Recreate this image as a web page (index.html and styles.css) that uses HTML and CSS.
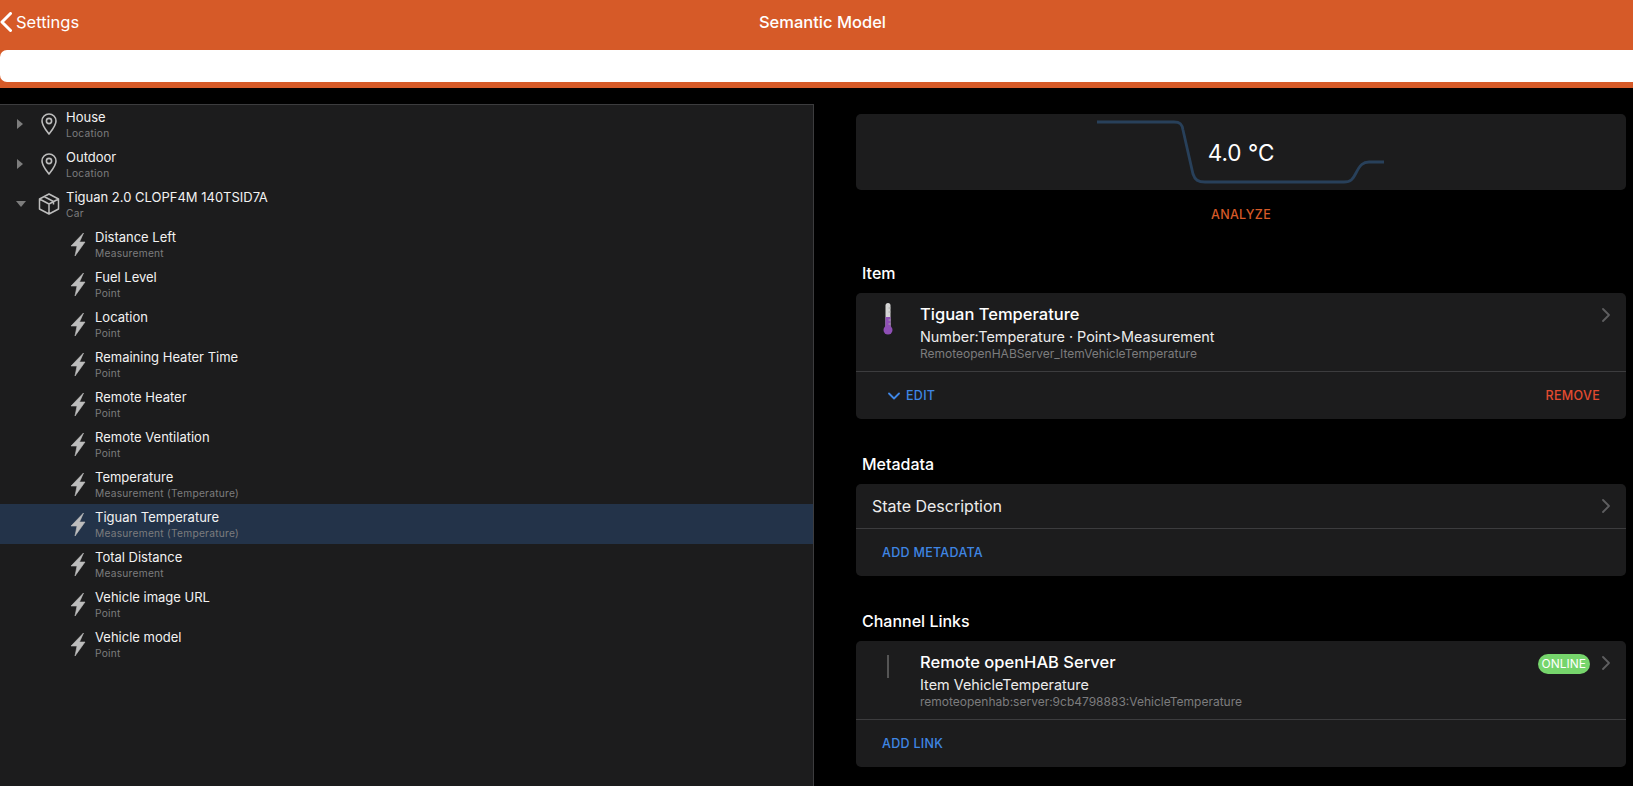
FILE: index.html
```html
<!DOCTYPE html>
<html lang="en">
<head>
<meta charset="utf-8">
<title>Semantic Model</title>
<link rel="stylesheet" href="styles.css">
</head>
<body>
<svg class="defs" width="0" height="0" aria-hidden="true">
  <symbol id="pin" viewBox="0 0 16 22"><path d="M8 21C4.500 16.500 1 12.500 1 8a7 7 0 0 1 14 0c0 4.500-3.500 8.500-7 13Z" fill="none" stroke="currentColor" stroke-width="1.600" stroke-linejoin="round"/><circle cx="8" cy="8" r="2.600" fill="none" stroke="currentColor" stroke-width="1.600"/></symbol>
  <symbol id="cube" viewBox="0 0 22 22"><path d="M11 1 20.500 6v10L11 21 1.500 16V6L11 1ZM1.500 6 11 11l9.500-5M11 11v10M6 3.500l9.500 5v3" fill="none" stroke="currentColor" stroke-width="1.500" stroke-linejoin="round"/></symbol>
  <symbol id="bolt" viewBox="0 0 16 23"><path d="M13.500 0 1 13h6L5 23 15 9H9.500L13.500 0Z" fill="currentColor" stroke="currentColor" stroke-width=".6" stroke-linejoin="round"/></symbol>
  <symbol id="chev" viewBox="0 0 8 14"><path d="M1 1l6 6-6 6" fill="none" stroke="currentColor" stroke-width="1.800" stroke-linecap="round" stroke-linejoin="round"/></symbol>
</svg>

<header class="topbar">
  <div class="navbar">
    <a class="back"><svg class="back-icon" viewBox="0 0 12 20"><path d="M10.500 1.500 2 10l8.500 8.500" fill="none" stroke="currentColor" stroke-width="3" stroke-linecap="round" stroke-linejoin="round"/></svg>Settings</a>
    <h1 class="title">Semantic Model</h1>
  </div>
  <div class="search"></div>
</header>

<main class="layout">
  <nav class="tree">
    <div class="row">
      <span class="tog tog-right"></span>
      <svg class="ic ic-pin"><use href="#pin"/></svg>
      <div class="txt"><div class="name">House</div><div class="sub">Location</div></div>
    </div>
    <div class="row">
      <span class="tog tog-right"></span>
      <svg class="ic ic-pin"><use href="#pin"/></svg>
      <div class="txt"><div class="name">Outdoor</div><div class="sub">Location</div></div>
    </div>
    <div class="row">
      <span class="tog tog-down"></span>
      <svg class="ic ic-cube"><use href="#cube"/></svg>
      <div class="txt"><div class="name">Tiguan 2.0 CLOPF4M 140TSID7A</div><div class="sub">Car</div></div>
    </div>
    <div class="row child"><svg class="ic ic-bolt"><use href="#bolt"/></svg><div class="txt"><div class="name">Distance Left</div><div class="sub">Measurement</div></div></div>
    <div class="row child"><svg class="ic ic-bolt"><use href="#bolt"/></svg><div class="txt"><div class="name">Fuel Level</div><div class="sub">Point</div></div></div>
    <div class="row child"><svg class="ic ic-bolt"><use href="#bolt"/></svg><div class="txt"><div class="name">Location</div><div class="sub">Point</div></div></div>
    <div class="row child"><svg class="ic ic-bolt"><use href="#bolt"/></svg><div class="txt"><div class="name">Remaining Heater Time</div><div class="sub">Point</div></div></div>
    <div class="row child"><svg class="ic ic-bolt"><use href="#bolt"/></svg><div class="txt"><div class="name">Remote Heater</div><div class="sub">Point</div></div></div>
    <div class="row child"><svg class="ic ic-bolt"><use href="#bolt"/></svg><div class="txt"><div class="name">Remote Ventilation</div><div class="sub">Point</div></div></div>
    <div class="row child"><svg class="ic ic-bolt"><use href="#bolt"/></svg><div class="txt"><div class="name">Temperature</div><div class="sub">Measurement (Temperature)</div></div></div>
    <div class="row child selected"><svg class="ic ic-bolt"><use href="#bolt"/></svg><div class="txt"><div class="name">Tiguan Temperature</div><div class="sub">Measurement (Temperature)</div></div></div>
    <div class="row child"><svg class="ic ic-bolt"><use href="#bolt"/></svg><div class="txt"><div class="name">Total Distance</div><div class="sub">Measurement</div></div></div>
    <div class="row child"><svg class="ic ic-bolt"><use href="#bolt"/></svg><div class="txt"><div class="name">Vehicle image URL</div><div class="sub">Point</div></div></div>
    <div class="row child"><svg class="ic ic-bolt"><use href="#bolt"/></svg><div class="txt"><div class="name">Vehicle model</div><div class="sub">Point</div></div></div>
  </nav>

  <section class="detail">
    <div class="card state">
      <svg class="chart" viewBox="0 0 770 76"><path d="M241 8H318C324 8 326 10 327 16L337 60C339 66 342 68 349 68H488C495 68 497 65 500 59C504 51 507 48 513 48H528" fill="none" stroke="#28405a" stroke-width="2.800"/></svg>
      <span class="value">4.0 °C</span>
    </div>
    <div class="analyze">ANALYZE</div>

    <h2 class="heading h-item">Item</h2>
    <div class="card">
      <div class="item">
        <div class="item-media">
          <svg class="thermo" viewBox="0 0 10 32"><rect x="2.500" y="0" width="5" height="26" rx="2.500" fill="#d5d5d5"/><rect x="2.500" y="14" width="5" height="12" fill="#8e4fb5"/><circle cx="5" cy="27" r="4.500" fill="#8e4fb5"/><path d="M5.500 5H7.500M5.500 9H7.500M5.500 17H7.500M5.500 21H7.500" stroke="#a9a9a9" stroke-width="1"/></svg>
        </div>
        <div class="item-body">
          <div class="item-title">Tiguan Temperature</div>
          <div class="item-line">Number:Temperature · Point&gt;Measurement</div>
          <div class="item-foot">RemoteopenHABServer_ItemVehicleTemperature</div>
        </div>
        <svg class="chevron"><use href="#chev"/></svg>
      </div>
      <div class="actions actions-edit">
        <span class="act blue"><svg class="down" viewBox="0 0 12 8"><path d="M1 1.500l5 5 5-5" fill="none" stroke="currentColor" stroke-width="1.800" stroke-linecap="round" stroke-linejoin="round"/></svg>EDIT</span>
        <span class="act red">REMOVE</span>
      </div>
    </div>

    <h2 class="heading h-meta">Metadata</h2>
    <div class="card">
      <div class="simple"><span>State Description</span><svg class="chevron"><use href="#chev"/></svg></div>
      <div class="actions"><span class="act blue">ADD METADATA</span></div>
    </div>

    <h2 class="heading h-links">Channel Links</h2>
    <div class="card">
      <div class="item">
        <div class="item-media"><span class="bar"></span></div>
        <div class="item-body">
          <div class="item-title">Remote openHAB Server</div>
          <div class="item-line">Item VehicleTemperature</div>
          <div class="item-foot">remoteopenhab:server:9cb4798883:VehicleTemperature</div>
        </div>
        <span class="badge">ONLINE</span>
        <svg class="chevron"><use href="#chev"/></svg>
      </div>
      <div class="actions"><span class="act blue">ADD LINK</span></div>
    </div>
  </section>
</main>
</body>
</html>
```
FILE: styles.css
```css
* { box-sizing: border-box; }
html, body { margin: 0; height: 100%; }
body {
  background: #000;
  color: #fff;
  font-family: Inter, "Noto Sans", sans-serif;
  overflow: hidden;
  display: flex;
  flex-direction: column;
}
.defs { position: absolute; }

.topbar { background: #d65a28; height: 88px; flex: none; }
.navbar { height: 50px; position: relative; display: flex; align-items: center; justify-content: center; }
.back { position: absolute; left: 0; top: 0; height: 44px; display: flex; align-items: center; font-size: 16.500px; gap: 4px; }
.back-icon { width: 12px; height: 20px; }
.title { margin: 0 0 0 12px; font-size: 16.500px; font-weight: 500; line-height: 44px; height: 44px; align-self: flex-start; }
.search { height: 32px; background: #fff; border-radius: 7px 0 0 7px; }

.layout { flex: 1; display: flex; padding-top: 16px; min-height: 0; }

.tree {
  width: 814px;
  flex: none;
  background: #1c1c1d;
  box-shadow: inset 0 1px 0 #3c3c3e, inset -1px 0 0 #3c3c3e;
}
.row { height: 40px; display: flex; align-items: center; padding-left: 16px; color: #fff; }
.row.child { padding-left: 70px; }
.row.selected { background: #233349; margin-right: 1px; }
.tog { width: 0; height: 0; flex: none; border-style: solid; border-color: transparent; }
.tog-right { margin-left: 1px; margin-right: 18px; border-width: 5.500px 0 5.500px 6px; border-left-color: #7d7d7d; }
.tog-down { margin-right: 15px; border-width: 6px 5.500px 0; border-top-color: #7d7d7d; }
.ic { flex: none; color: #bdbdbd; }
.ic-pin { width: 16px; height: 22px; margin: 0 9px 0 0; }
.ic-cube { width: 22px; height: 22px; margin: 0 6px 0 -3px; }
.ic-bolt { width: 16px; height: 23px; margin-right: 9px; }
.txt { margin-top: 0; }
.name { font-size: 13px; line-height: 16px; color: #f2f2f2; }
.sub { font-size: 10.200px; line-height: 13px; margin-top: 2px; color: #7c7c7e; letter-spacing: .25px; }

.detail { flex: 1; padding: 10px 7px 0 42px; min-width: 0; }
.card { background: #1c1c1d; border-radius: 5px; }
.state { height: 76px; position: relative; display: flex; align-items: center; justify-content: center; }
.chart { position: absolute; left: 0; top: 0; width: 770px; height: 76px; }
.value { position: relative; font-size: 22.500px; }
.analyze { height: 48px; display: flex; align-items: center; justify-content: center; font-size: 12.500px; font-weight: 500; color: #d65a28; letter-spacing: .3px; }

.heading { margin: 0; padding-left: 6px; font-size: 16px; font-weight: 500; line-height: 20px; color: #fff; }
.h-item { padding-top: 25px; height: 55px; }
.h-meta { padding-top: 35px; height: 65px; }
.h-links { padding-top: 35px; height: 65px; }

.item { height: 79px; display: flex; align-items: flex-start; border-bottom: 1px solid #3c3c3e; position: relative; padding-right: 16px; }
.item-media { width: 64px; padding: 10px 0 0 27px; flex: none; }
.thermo { display: block; width: 10px; height: 32px; }
.bar { display: block; width: 2px; height: 23px; margin: 4px 0 0 4px; background: #555; }
.item-body { flex: 1; padding-top: 11px; }
.item-title { font-size: 16.500px; font-weight: 500; line-height: 20px; }
.item-line { font-size: 14.400px; line-height: 18px; margin-top: 4px; color: #ececec; }
.item-foot { font-size: 12px; line-height: 14px; margin-top: 1px; color: #7c7c7e; }
.chevron { width: 8px; height: 14px; flex: none; color: #5e5e60; margin-top: 15px; }
.badge { background: #76d56c; color: #fff; font-size: 12px; line-height: 20px; height: 20px; padding: 0 4px; border-radius: 10px; margin: 13px 12px 0 0; }

.actions { height: 47px; display: flex; align-items: center; justify-content: space-between; padding: 0 26px; }
.actions-edit { padding-left: 32px; }
.act { display: flex; align-items: center; font-size: 12.500px; font-weight: 500; letter-spacing: .3px; }
.blue { color: #3f86e4; }
.red { color: #e34b30; }
.down { width: 12px; height: 8px; margin-right: 6px; }

.simple { height: 45px; display: flex; align-items: center; justify-content: space-between; padding: 0 16px; font-size: 16px; color: #ececec; border-bottom: 1px solid #3c3c3e; }
.simple .chevron { margin-top: 0; }
```
